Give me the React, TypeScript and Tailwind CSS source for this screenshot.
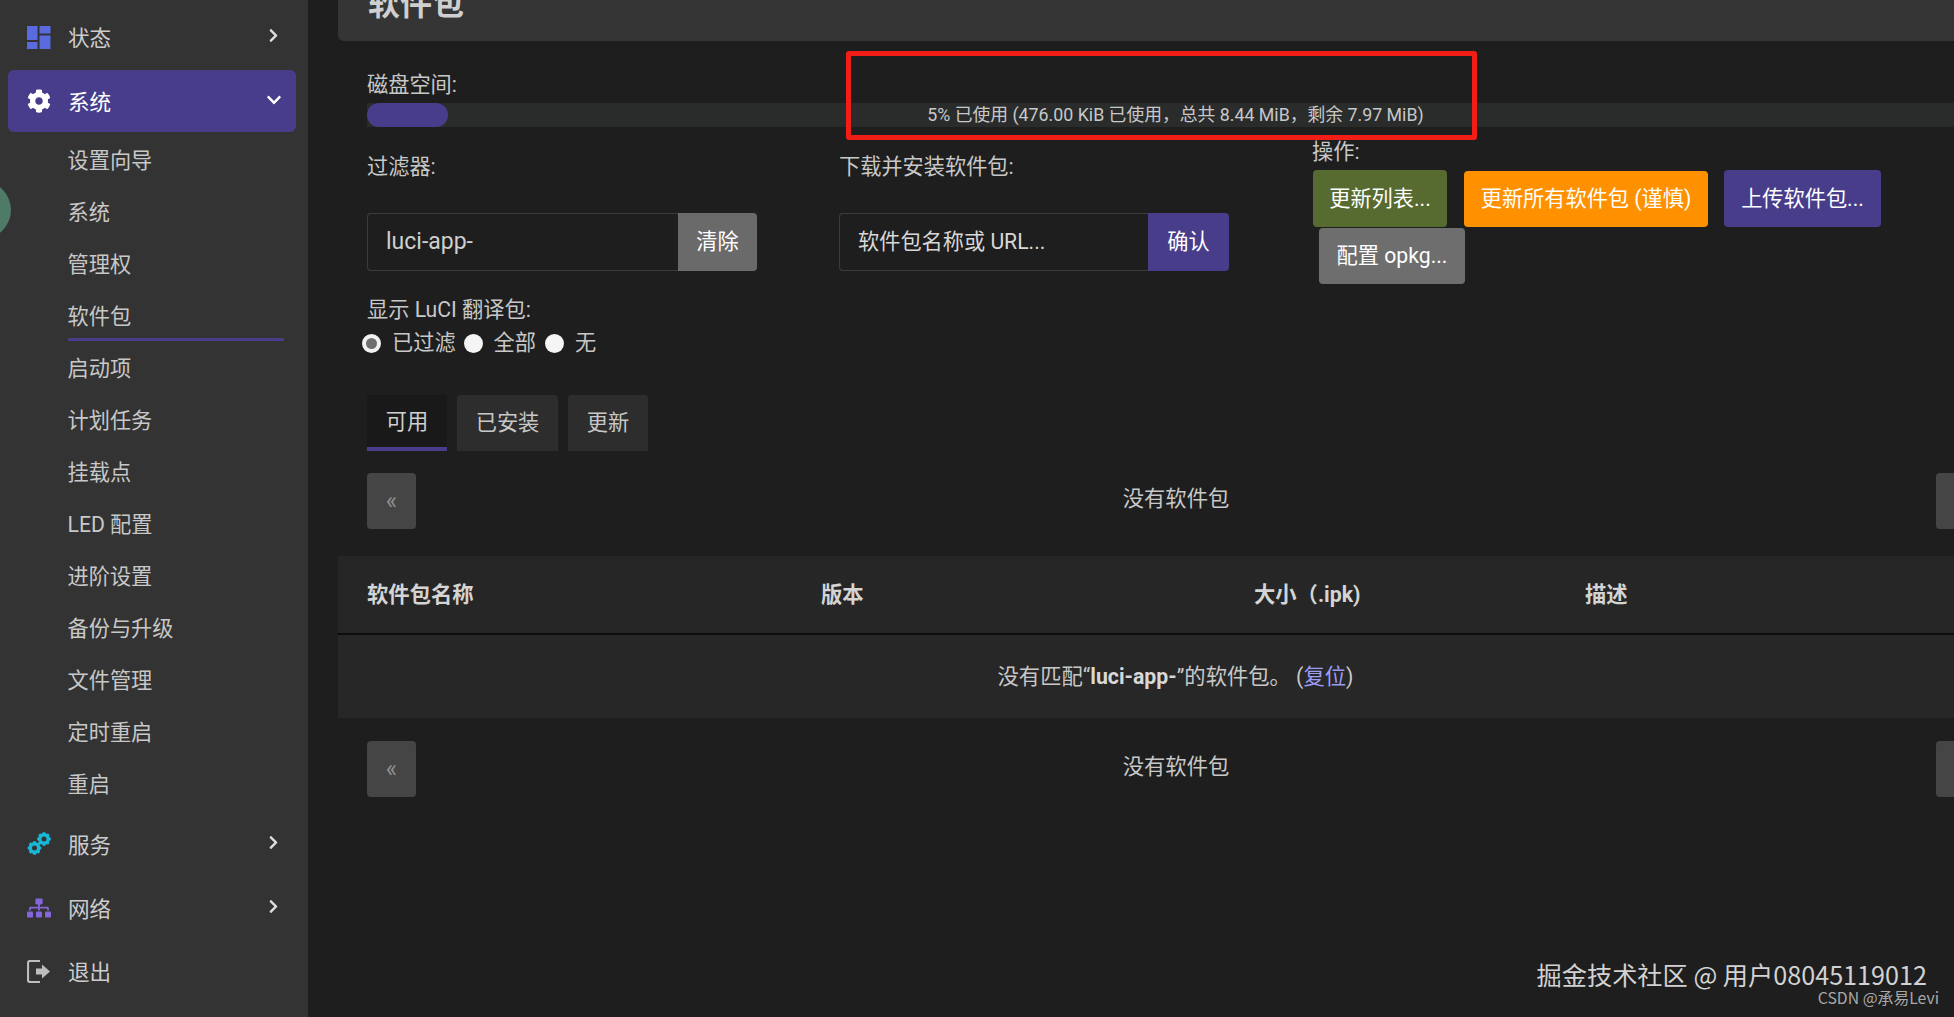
import React from "react";
import { FaChevronRight, FaChevronDown, FaCog, FaSitemap } from "react-icons/fa";

function TopItem({ icon, label, active, open, last }: { icon: React.ReactNode; label: string; active?: boolean; open?: boolean; last?: boolean }) {
  return (
    <div className={`ml-2 mr-[12px] mb-[2px] flex h-[62px] items-center rounded-[6px] pl-[19px] pr-[14px] ${last ? "-mt-[1px]" : ""} ${active ? "bg-[#483d8b] text-white" : "text-[#cccccc]"}`}>
      <span className="flex w-[41px] shrink-0 items-center">{icon}</span>
      <span className="flex-1 pt-[3px] text-[21.6px] leading-none">{label}</span>
      {open === undefined ? null : open ? (
        <FaChevronDown className="-mt-[2px] text-[16px] text-white" />
      ) : (
        <FaChevronRight className="-mt-[3px] mr-[1px] text-[15px] text-[#dddddd]" />
      )}
    </div>
  );
}

function SubItem({ label, active }: { label: string; active?: boolean }) {
  return (
    <div className={`ml-[67.5px] mr-[24px] flex items-center text-[21.2px] leading-none text-[#c8c8c8] ${active ? "mb-[1px] h-[51px] pt-[3px] shadow-[inset_0_-3px_0_#483d8b]" : "h-[52px] pt-[2px]"}`}>
      {label}
    </div>
  );
}

function Pager() {
  return (
    <div className="flex items-center justify-between">
      <div className="flex h-[56px] w-[49px] items-center justify-center rounded-[4px] bg-[#454545] pb-[1px] text-[24px] text-[#8f8f8f]">«</div>
      <div className="pb-[5px] text-[21.3px] leading-none text-[#c8c8c8]">没有软件包</div>
      <div className="h-[56px] w-[48px] rounded-[4px] bg-[#454545]" />
    </div>
  );
}

function Radio({ checked }: { checked?: boolean }) {
  return checked ? (
    <span className="block h-[19px] w-[19px] rounded-full border-[4px] border-[#f2f2f2] bg-[#6f6f6f]" />
  ) : (
    <span className="block h-[19px] w-[19px] rounded-full bg-[#f5f5f5]" />
  );
}

function ActionButton({ label, className }: { label: string; className: string }) {
  return (
    <div className={`flex items-center justify-center rounded-[4px] text-[21.2px] leading-none text-white ${className}`}>{label}</div>
  );
}

function Gear({ cx, cy, r }: { cx: number; cy: number; r: number }) {
  return (
    <g transform={`translate(${cx} ${cy})`}>
      <circle r={r * 0.62} fill="none" stroke="#19b8d8" strokeWidth={r * 0.5} />
      {[0, 45, 90, 135, 180, 225, 270, 315].map((a) => (
        <rect key={a} x={-r * 0.2} y={-r} width={r * 0.4} height={r * 0.4} fill="#19b8d8" transform={`rotate(${a})`} />
      ))}
    </g>
  );
}

export default function App() {
  return (
    <div
      className="relative flex h-screen w-full overflow-hidden bg-[#1e1e1e] text-[#c8c8c8]"
      style={{ fontFamily: '"Roboto", "Noto Sans CJK SC", sans-serif' }}
    >
      <aside className="w-[308px] shrink-0 bg-[#333333] pt-[6px]">
        <TopItem
          open={false}
          label="状态"
          icon={
            <svg width="24" height="23" viewBox="0 0 24 23" className="fill-[#5a6be0]">
              <rect x="0" y="0" width="10.5" height="14" />
              <rect x="0" y="16" width="10.5" height="7" />
              <rect x="12.5" y="0" width="11" height="7.5" />
              <rect x="12.5" y="9.5" width="11" height="13.5" />
            </svg>
          }
        />
        <TopItem active open label="系统" icon={<FaCog className="text-[24px] text-white" />} />
        <div className="mb-[3px]">
          {["设置向导", "系统", "管理权"].map((l) => (
            <SubItem key={l} label={l} />
          ))}
          <SubItem label="软件包" active />
          {["启动项", "计划任务", "挂载点", "LED 配置", "进阶设置", "备份与升级", "文件管理", "定时重启", "重启"].map((l) => (
            <SubItem key={l} label={l} />
          ))}
        </div>
        <TopItem
          open={false}
          label="服务"
          icon={
            <svg width="24" height="24" viewBox="0 0 24 24">
              <Gear cx={7.5} cy={16} r={6.8} />
              <Gear cx={17} cy={7} r={6.8} />
            </svg>
          }
        />
        <TopItem open={false} label="网络" icon={<FaSitemap className="text-[24px] text-[#8465dc]" />} />
        <TopItem
          last
          label="退出"
          icon={
            <svg width="24" height="23" viewBox="0 0 24 23" fill="none">
              <path d="M13 1H3a2 2 0 0 0-2 2v17a2 2 0 0 0 2 2h10" stroke="#bdbdbd" strokeWidth="2.2" />
              <path d="M9 8.5h6V4.5l8 7-8 7v-4H9z" fill="#bdbdbd" />
            </svg>
          }
        />
      </aside>

      <main className="min-w-0 flex-1 overflow-hidden pl-[30px]">
        <div className="w-[1646px]">
          <div className="h-[41px] overflow-hidden rounded-bl-[6px] bg-[#353535] pl-[30px]">
            <div className="-mt-[18px] text-[32px] font-bold leading-[44px] text-[#cfcfcf]">软件包</div>
          </div>

          <div className="pl-[29px]">
            <div className="mt-[31px] text-[21.2px] leading-[26px]">磁盘空间:</div>
            <div className="mt-[5px] grid h-[24px] bg-[#2a2c2c] text-[17.8px]">
              <div className="[grid-area:1/1] h-[24px] w-[81px] rounded-[12px] bg-[#483d8b]" />
              <div className="[grid-area:1/1] flex items-center justify-center whitespace-nowrap leading-none text-[#c8c8c8]">
                5% 已使用 (476.00 KiB 已使用，总共 8.44 MiB，剩余 7.97 MiB)
              </div>
            </div>

            <div className="flex items-start">
              <div className="w-[472px] shrink-0">
                <div className="mt-[27px] text-[21.2px] leading-[26px]">过滤器:</div>
                <div className="mt-[33px] flex h-[58px] w-[390px]">
                  <div className="flex flex-1 items-center rounded-l-[4px] border border-r-0 border-[#3c3c3c] pl-[18px] text-[23px] text-[#cfcfcf]">luci-app-</div>
                  <div className="flex w-[79px] items-center justify-center rounded-r-[4px] bg-[#6a6a6a] text-[21.2px] text-white">清除</div>
                </div>
                <div className="mt-[26px] text-[21.2px] leading-[26px]">显示 LuCI 翻译包:</div>
                <div className="-ml-[5px] mt-[8px] flex h-[24px] items-center text-[21.2px] leading-none">
                  <Radio checked />
                  <span className="ml-[11px] mr-[8px]">已过滤</span>
                  <Radio />
                  <span className="ml-[11px] mr-[9px]">全部</span>
                  <Radio />
                  <span className="ml-[11px]">无</span>
                </div>
              </div>

              <div className="w-[473px] shrink-0">
                <div className="mt-[27px] text-[21.2px] leading-[26px]">下载并安装软件包:</div>
                <div className="mt-[33px] flex h-[58px] w-[390px]">
                  <div className="flex flex-1 items-center rounded-l-[4px] border border-r-0 border-[#3c3c3c] pl-[18px] text-[21.2px] text-[#d8d8d8]">软件包名称或 URL...</div>
                  <div className="flex w-[81px] items-center justify-center rounded-r-[4px] bg-[#483d8b] text-[21.2px] text-white">确认</div>
                </div>
              </div>

              <div>
                <div className="mt-[12px] text-[21.2px] leading-[26px]">操作:</div>
                <div className="ml-[1px] mt-[5px] flex items-center">
                  <ActionButton label="更新列表..." className="h-[57px] w-[134px] bg-[#576a30]" />
                  <ActionButton label="更新所有软件包 (谨慎)" className="ml-[17px] h-[56px] w-[244px] bg-[#ff9100]" />
                  <ActionButton label="上传软件包..." className="ml-[16px] h-[57px] w-[157px] bg-[#483d8b]" />
                </div>
                <ActionButton label="配置 opkg..." className="ml-[7px] mt-[1px] h-[56px] w-[146px] bg-[#6e6e6e]" />
              </div>
            </div>

            <div className="mt-[40px] flex gap-[10px] text-[21.2px] leading-none">
              <div className="flex h-[56px] w-[80px] items-center justify-center border-b-4 border-[#483d8b] bg-[#191919] pt-[2px] text-[#d0d0d0]">可用</div>
              <div className="flex h-[56px] w-[101px] items-center justify-center rounded-t-[4px] bg-[#2d2d2d]">已安装</div>
              <div className="flex h-[56px] w-[80px] items-center justify-center rounded-t-[4px] bg-[#2d2d2d]">更新</div>
            </div>

            <div className="mt-[22px]">
              <Pager />
            </div>
          </div>

          <div className="mt-[27px] flex h-[79px] items-center border-b-2 border-[#0c0c0c] bg-[#262626] pl-[29px] text-[21.3px] font-bold leading-none text-[#d4d4d4]">
            <div className="w-[454px]">软件包名称</div>
            <div className="w-[433px]">版本</div>
            <div className="w-[331px]">大小（.ipk)</div>
            <div>描述</div>
          </div>
          <div className="flex h-[83px] items-center justify-center whitespace-nowrap bg-[#272727] pl-[29px] text-[21.3px] leading-none text-[#c8c8c8]">
            <span>
              没有匹配“<b className="text-[#d8d8d8]">luci-app-</b>”的软件包。 (<span className="text-[#9c9cf5]">复位</span>)
            </span>
          </div>

          <div className="mt-[23px] pl-[29px]">
            <Pager />
          </div>
        </div>
      </main>

      <div className="absolute left-[846px] top-[51px] h-[89px] w-[631px] rounded-[3px] border-[5px] border-[#f01e16]" />
      <div className="absolute -left-[47px] top-[181px] h-[58px] w-[58px] rounded-full bg-[#4f7a68]" />
      <div className="absolute right-[27px] top-[960px] whitespace-nowrap text-[25.2px] leading-[28px] text-[#d2d2d2]" style={{ fontFamily: '"Noto Sans CJK SC", sans-serif' }}>
        掘金技术社区 @ 用户08045119012
      </div>
      <div className="absolute right-[15px] top-[988px] whitespace-nowrap text-[15.8px] leading-[19px] text-[#a8a8a8]" style={{ fontFamily: '"Noto Sans CJK SC", sans-serif' }}>
        CSDN @承易Levi
      </div>
    </div>
  );
}
